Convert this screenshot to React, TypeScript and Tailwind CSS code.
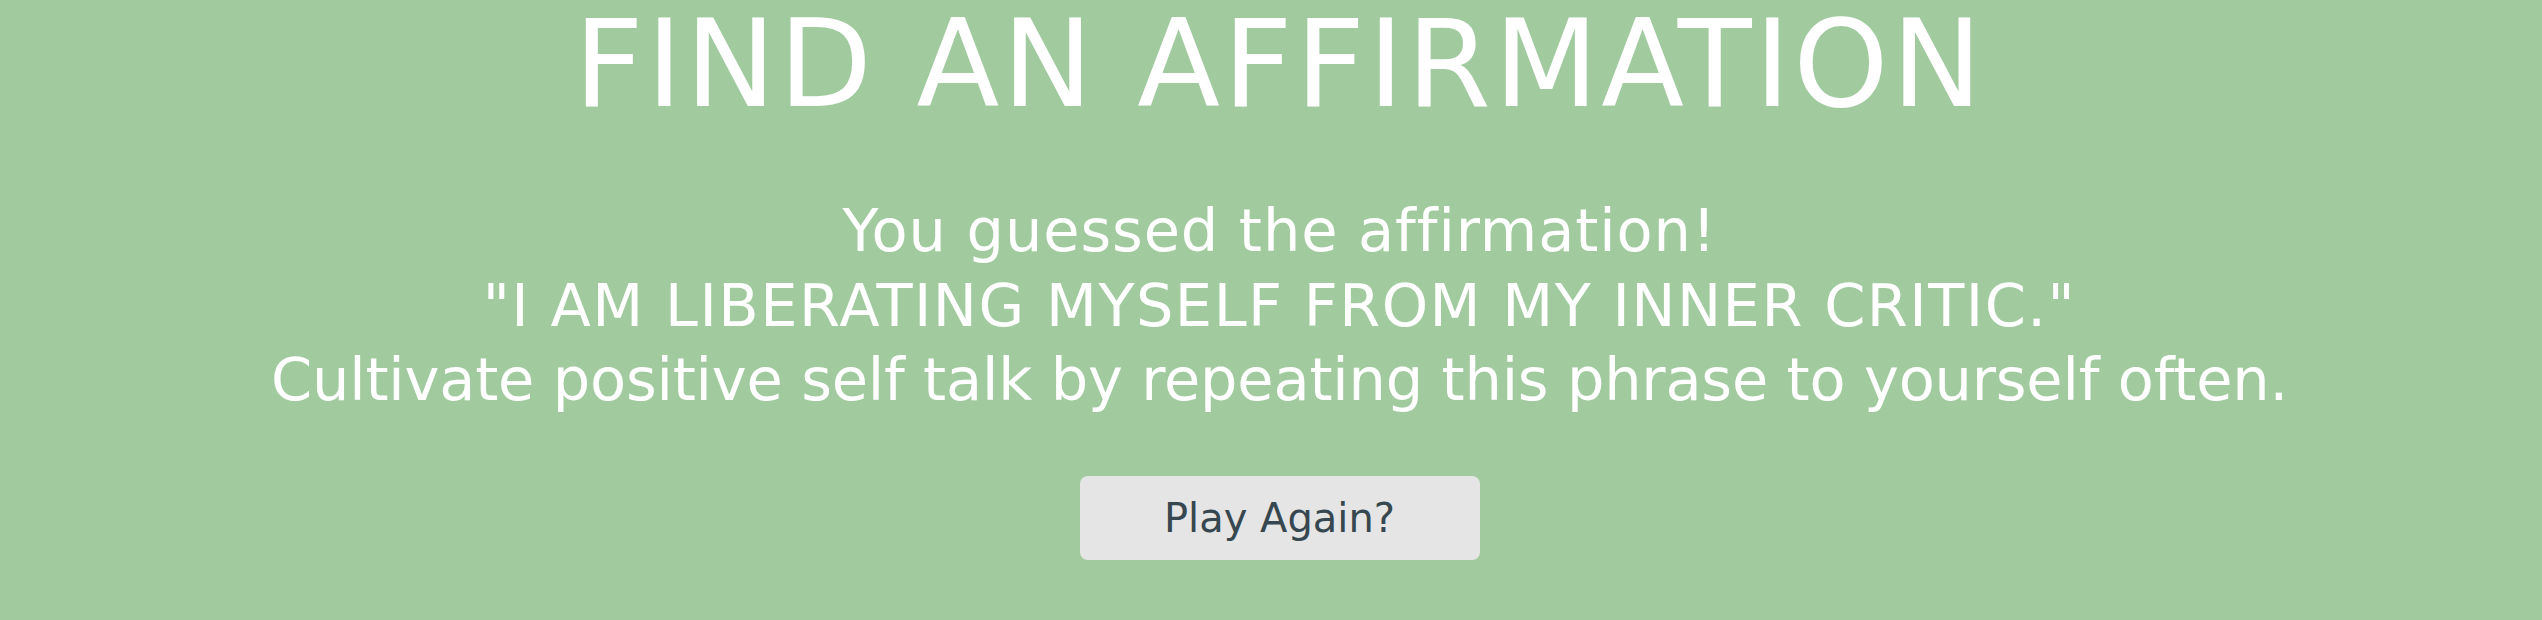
export default function App() {
  return (
    <div className="w-full h-[620px] bg-[#a1cb9f] flex flex-col items-center overflow-hidden pl-[17px]" style={{ fontFamily: '"DejaVu Sans", sans-serif' }}>
      <h1 className="text-[121px] leading-[130px] text-white tracking-[3px] whitespace-nowrap">FIND AN AFFIRMATION</h1>
      <div className="mt-[64px] text-center text-white text-[59px] leading-[74.5px] whitespace-nowrap">
        <p className="tracking-[0.9px]">You guessed the affirmation!</p>
        <p className="tracking-[1.5px]">"I AM LIBERATING MYSELF FROM MY INNER CRITIC."</p>
        <p className="tracking-[-0.2px]">Cultivate positive self talk by repeating this phrase to yourself often.</p>
      </div>
      <button className="mt-[58px] w-[400px] h-[84px] rounded-[8px] bg-[#e5e5e5] text-[#37474f] text-[40px]">Play Again?</button>
    </div>
  );
}
